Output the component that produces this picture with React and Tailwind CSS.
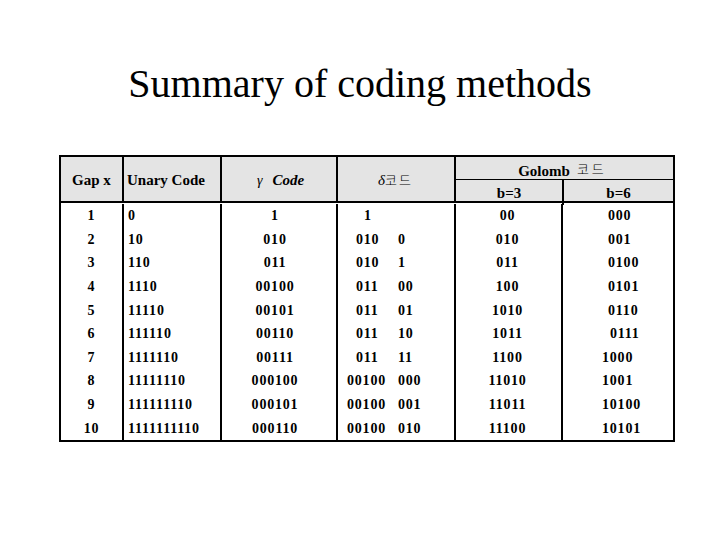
import React from "react";

const rows = [
  ["1", "0", "1", ["1", "", "pl-[26px]"], "00", "000", "pl-[45px]"],
  ["2", "10", "010", ["010", "0", "pl-[18px]"], "010", "001", "pl-[45px]"],
  ["3", "110", "011", ["010", "1", "pl-[18px]"], "011", "0100", "pl-[45px]"],
  ["4", "1110", "00100", ["011", "00", "pl-[18px]"], "100", "0101", "pl-[45px]"],
  ["5", "11110", "00101", ["011", "01", "pl-[18px]"], "1010", "0110", "pl-[45px]"],
  ["6", "111110", "00110", ["011", "10", "pl-[18px]"], "1011", "0111", "pl-[47px]"],
  ["7", "1111110", "00111", ["011", "11", "pl-[18px]"], "1100", "1000", "pl-[39px]"],
  ["8", "11111110", "000100", ["00100", "000", "pl-[9px]"], "11010", "1001", "pl-[39px]"],
  ["9", "111111110", "000101", ["00100", "001", "pl-[9px]"], "11011", "10100", "pl-[39px]"],
  ["10", "1111111110", "000110", ["00100", "010", "pl-[9px]"], "11100", "10101", "pl-[39px]"],
];

const serif = "font-['Liberation_Serif','Times_New_Roman',serif]";

export default function App() {
  return (
    <div className={`w-[720px] h-[540px] bg-white text-black ${serif}`}>
      <div className="pt-[64px] text-center text-[40px] leading-[40px]">
        Summary of coding methods
      </div>
      <div className="ml-[59px] mt-[51px] w-[616px] border-2 border-black">
        {/* header */}
        <div className="flex h-[46px] bg-[#e4e4e4] border-b-2 border-black font-bold text-[15px]">
          <div className="w-[61px] flex items-center justify-center pt-[2px]">Gap x</div>
          <div className="w-[98px] border-l-2 border-black flex items-center pl-[3px] pt-[2px]">
            Unary Code
          </div>
          <div className="w-[116px] border-l-2 border-black flex items-center pl-[35px] pt-[2px]">
            <span className="italic font-normal text-[14px]">γ</span>
            <span className="italic ml-[10px]">Code</span>
          </div>
          <div className="w-[118px] border-l-2 border-black flex items-center pl-[40px] pt-[2px] font-normal">
            <span className="italic text-[15px]">δ</span>
            <span className="text-[13px] font-['Noto_Sans_CJK_KR',sans-serif] font-light tracking-[2px]">코드</span>
          </div>
          <div className="w-[219px] border-l-2 border-black flex flex-col">
            <div className="h-[24px] border-b border-black flex items-start justify-center pt-[7px] pr-[4px]">
              <span className="leading-[15px]">Golomb</span>
              <span className="ml-[7px] -mt-[3px] leading-[15px] text-[13px] font-light font-['Noto_Sans_CJK_KR',sans-serif] tracking-[3px]">
                코드
              </span>
            </div>
            <div className="flex flex-1">
              <div className="w-[107px] flex items-center justify-center pt-[2px]">b=3</div>
              <div className="w-[112px] border-l-2 border-black flex items-center justify-center pt-[2px]">
                b=6
              </div>
            </div>
          </div>
        </div>
        {/* body */}
        <div className="font-bold text-[14px] tracking-[0.8px] bg-white">
          {rows.map((r, i) => (
            <div key={i} className={`flex ${i === 0 ? "h-[24.5px] pt-[1px]" : "h-[23.6px]"}`}>
              <div className="w-[61px] flex items-center justify-center">{r[0]}</div>
              <div className="w-[98px] border-l-2 border-black flex items-center pl-[4px]">{r[1]}</div>
              <div className="w-[116px] border-l-2 border-black flex items-center justify-center pr-[8px]">
                {r[2]}
              </div>
              <div className="w-[118px] border-l-2 border-black flex items-center">
                <span className={`w-[60px] ${r[3][2]}`}>{r[3][0]}</span>
                <span>{r[3][1]}</span>
              </div>
              <div className="w-[107px] border-l-2 border-black flex items-center justify-center pr-[2px]">
                {r[4]}
              </div>
              <div className={`w-[112px] border-l-2 border-black flex items-center ${r[6]}`}>{r[5]}</div>
            </div>
          ))}
        </div>
      </div>
    </div>
  );
}
